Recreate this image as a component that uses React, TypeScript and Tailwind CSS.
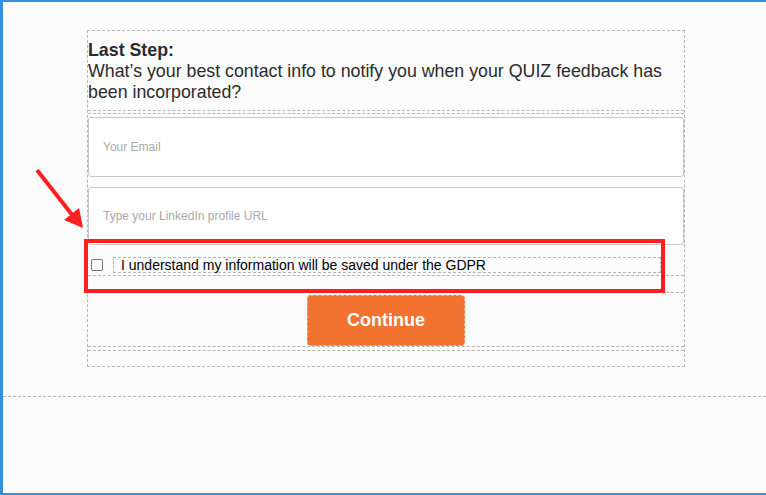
import React from 'react';

const dash = 'border-dashed border-[#b5b5b5]';

export default function App() {
  return (
    <div
      className="relative h-[495px] w-[766px] overflow-hidden border-t-2 border-b-2 border-l-[3px] border-[#3490e0] bg-[#fcfcfc]"
      style={{ fontFamily: '"Liberation Sans", Arial, Helvetica, sans-serif' }}
    >
      <div className={`ml-[84px] mt-[28px] w-[598px] border ${dash}`}>
        <div className={`border-b pt-[9px] pb-[7px] text-[17.8px] leading-[21px] text-[#2b2b2b] ${dash}`}>
          <div className="font-bold">Last Step:</div>
          <div>What’s your best contact info to notify you when your QUIZ feedback has been incorporated?</div>
        </div>

        <div className={`mt-[2px] border-t pt-[3px] ${dash}`}>
          <div className="flex h-[60px] items-center rounded-[3px] border border-[#c8c8c8] bg-white pl-[14px] text-[12px] text-[#a9a9a9]">
            <span>Your Email</span>
          </div>
          <div className="mt-[10px] flex h-[58px] items-center rounded-[3px] border border-[#c8c8c8] bg-white pl-[14px] text-[12px] text-[#a9a9a9]">
            <span>Type your LinkedIn profile URL</span>
          </div>
        </div>

        <div className={`border-b pt-[12px] pb-[2px] ${dash}`}>
          <div className="flex items-center">
            <span className="ml-[3px] h-[12px] w-[12px] rounded-[2px] border border-[#767676] bg-white" />
            <div className={`ml-[10px] flex h-[16px] w-[548px] items-center border pl-[7px] text-[14px] text-black ${dash}`}>
              I understand my information will be saved under the GDPR
            </div>
          </div>
        </div>

        <div className={`mt-[16px] flex justify-center border-y pt-[2px] ${dash}`}>
          <button className="flex h-[51px] w-[158px] items-center justify-center rounded-[4px] border border-dashed border-[#f7b08a] bg-[#f2732f] text-[18px] font-bold text-white">
            Continue
          </button>
        </div>
        <div className={`mt-[3px] mb-[15px] border-t ${dash}`} />
      </div>

      <div className={`mt-[29px] w-full border-t ${dash}`} />

      {/* annotation overlay */}
      <div className="absolute left-[81px] top-[237px] h-[54px] w-[581px] border-4 border-[#ff1f1f]" />
      <svg className="absolute left-0 top-0" width="120" height="260" viewBox="0 0 120 260">
        <line x1="34" y1="168" x2="70" y2="214" stroke="#ff1f1f" strokeWidth="4" />
        <polygon points="80,226 61,218 76,206" fill="#ff1f1f" />
      </svg>
    </div>
  );
}
